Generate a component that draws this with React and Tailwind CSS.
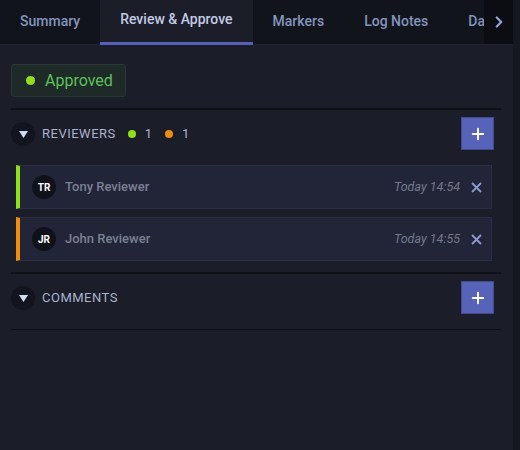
import { ChevronRight, Plus } from "lucide-react";

const tabs = ["Summary", "Review & Approve", "Markers", "Log Notes", "Data"];

const reviewers = [
  { initials: "TR", name: "Tony Reviewer", time: "Today 14:54", color: "border-l-[#8fe01a]" },
  { initials: "JR", name: "John Reviewer", time: "Today 14:55", color: "border-l-[#f08c10]" },
];

const Toggle = () => (
  <div className="w-6 h-6 rounded-full bg-[#121520] flex items-center justify-center">
    <svg width="9" height="7" viewBox="0 0 9 7" className="mt-[2px]">
      <polygon points="0,0 9,0 4.5,7" fill="#d3dbf0" />
    </svg>
  </div>
);

const AddButton = () => (
  <button className="w-[33px] h-[33px] bg-[#5663b8] border border-[#414b8c] flex items-center justify-center">
    <Plus size={18} strokeWidth={2.5} color="#ffffff" />
  </button>
);

export default function App() {
  return (
    <div
      className="w-[520px] h-[450px] flex bg-[#1b1d29] overflow-hidden"
      style={{ fontFamily: "Roboto, 'Liberation Sans', sans-serif" }}
    >
      <div className="flex-1 flex flex-col min-w-0">
        {/* tab bar */}
        <div className="h-[45px] flex bg-[#12141c] border-b border-[#20232f] relative">
          {tabs.map((t, i) => (
            <div
              key={t}
              className={
                i === 1
                  ? "px-5 h-[45px] flex items-center pb-[3px] text-[14px] font-medium text-[#c3cbe2] bg-[#1b1d29] border-b-[3px] border-[#5561b8] whitespace-nowrap"
                  : "px-5 h-[45px] flex items-center pb-[3px] text-[14px] font-medium text-[#8394bd] whitespace-nowrap"
              }
            >
              {t}
            </div>
          ))}
          <div className="absolute right-0 top-0 w-[29px] h-[44px] bg-[#0b0d13] flex items-center justify-center">
            <ChevronRight size={18} strokeWidth={3} color="#8ea3dc" />
          </div>
        </div>

        {/* content */}
        <div className="pl-[11px] pr-[12px] pt-[19px]">
          <div className="inline-flex items-center h-[33px] pl-[13px] pr-[12px] gap-[9px] bg-[#1e2a27] border border-[#2a3833] rounded-[3px]">
            <span className="w-[11px] h-[11px] rounded-full bg-[#93e01a] border border-[#0d1a05]" />
            <span className="text-[16px] text-[#5bc15a]">Approved</span>
          </div>

          <div className="mt-[11px] h-[2px] bg-[#0f1118]" />

          <div className="mt-[7px] h-[33px] flex items-center pr-[7px]">
            <Toggle />
            <span className="ml-[7px] text-[13px] text-[#a9b3cb] tracking-[0.5px]">REVIEWERS</span>
            <span className="ml-[12px] w-2 h-2 rounded-full bg-[#8fe01a]" />
            <span className="ml-[9px] text-[13px] text-[#a9b3cb]">1</span>
            <span className="ml-[13px] w-2 h-2 rounded-full bg-[#f08c10]" />
            <span className="ml-[9px] text-[13px] text-[#a9b3cb]">1</span>
            <div className="ml-auto">
              <AddButton />
            </div>
          </div>

          <div className="mt-[15px] ml-[5px] mr-[9px] flex flex-col gap-2">
            {reviewers.map((r) => (
              <div
                key={r.name}
                className={`h-[44px] flex items-center bg-[#222537] border border-[#2b2f44] border-l-4 ${r.color} pl-[12px] pr-[9px]`}
              >
                <div className="w-6 h-6 rounded-full bg-[#10121a] flex items-center justify-center text-[10px] font-bold text-white">
                  {r.initials}
                </div>
                <span className="ml-[9px] text-[13px] font-medium text-[#7a8095]">{r.name}</span>
                <span className="ml-auto text-[12.5px] italic text-[#737a8f]">{r.time}</span>
                <svg width="11" height="11" viewBox="0 0 11 11" className="ml-[11px]">
                  <path d="M1 1L10 10M10 1L1 10" stroke="#8b9ad0" strokeWidth="1.8" />
                </svg>
              </div>
            ))}
          </div>

          <div className="mt-[11px] h-[2px] bg-[#0f1118]" />

          <div className="mt-[7px] h-[33px] flex items-center pr-[7px]">
            <Toggle />
            <span className="ml-[7px] text-[13px] text-[#a9b3cb] tracking-[0.5px]">COMMENTS</span>
            <div className="ml-auto">
              <AddButton />
            </div>
          </div>

          <div className="mt-[15px] h-[1px] bg-[#0f1118]" />
        </div>
      </div>
      <div className="w-[7px] h-full bg-[#16181f]" />
    </div>
  );
}
